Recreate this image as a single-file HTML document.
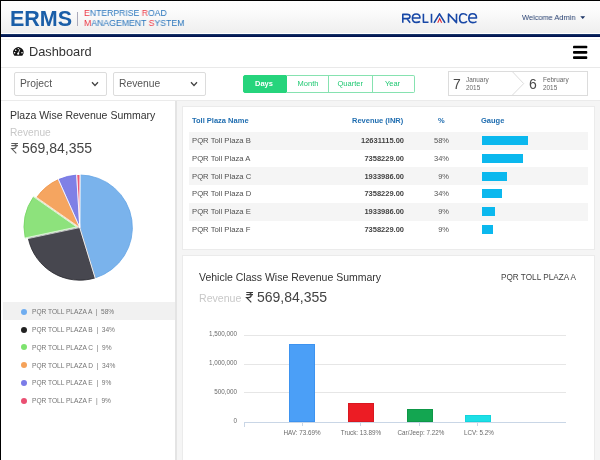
<!DOCTYPE html>
<html><head><meta charset="utf-8">
<style>
*{margin:0;padding:0;box-sizing:border-box}
html,body{width:600px;height:460px;overflow:hidden;background:#fff;}
.a{will-change:transform}
body{font-family:"Liberation Sans",sans-serif}
.a{position:absolute;white-space:nowrap}
#hdr{position:absolute;left:0;top:0;width:600px;height:34px;background:linear-gradient(#fefefe 0%,#fbfbfb 35%,#eeeeee 100%);}
#navy{position:absolute;left:0;top:34px;width:600px;height:3px;background:linear-gradient(#1d3c6e,#021652 60%,#00104c)}
#bl{position:absolute;left:0;top:0;width:1px;height:460px;background:#000;z-index:50}
#bt{position:absolute;left:0;top:0;width:600px;height:1px;background:#000;z-index:50}
.box{position:absolute;border:1px solid #dcdcdc;border-radius:2px;background:#fff}
.btn{will-change:transform;position:absolute;top:74.6px;height:17.6px;border:1px solid #86e2b0;color:#1fc872;font-size:7.5px;line-height:16px;text-align:center}
.tn{font-size:7.7px;color:#505050}
.tv{font-size:7.5px;color:#444;font-weight:bold;text-align:right}
.tp{font-size:7.5px;color:#555;text-align:right}
.lg{font-size:6.6px;color:#747474}
.dot{position:absolute;width:6px;height:6px;border-radius:50%}
.ax{font-size:6.3px;color:#6a6a6a}
</style></head><body>
<div id="bt"></div><div id="bl"></div>
<div id="hdr"></div>
<div class="a" style="left:0;top:33px;width:600px;height:1px;background:#fff"></div>
<div id="navy"></div>
<div class="a" style="left:0;top:39px;width:600px;height:1px;background:#f6f6f6"></div>

<div class="a" style="left:10.2px;top:8.5px;font-size:21.5px;line-height:21.5px;font-weight:bold;color:#1a5ea8">ERMS</div>
<div class="a" style="left:77px;top:11.5px;width:1px;height:14px;background:#aab"></div>
<div class="a" style="left:83.5px;top:8.6px;font-size:9px;line-height:9px;color:#2a76bd;transform:scaleX(0.962);transform-origin:0 0"><span style="color:#ec3845">E</span>NTERPRISE <span style="color:#ec3845">R</span>OAD</div>
<div class="a" style="left:83.5px;top:19px;font-size:9px;line-height:9px;color:#2a76bd;transform:scaleX(0.968);transform-origin:0 0"><span style="color:#ec3845">M</span>ANAGEMENT <span style="color:#ec3845">S</span>YSTEM</div>

<svg class="a" style="left:0;top:0" width="600" height="40" viewBox="0 0 600 40">
<g fill="none" stroke="#1747a6" stroke-width="1.6" stroke-linejoin="round">
<path d="M402.8 22.8 V14.4 H407 Q410 14.4 410 16.5 Q410 18.6 407 18.6 H402.8 M406.8 18.6 L410.2 22.8"/>
<path d="M412.4 18 H420 Q420 14 416.2 14 Q412.4 14 412.4 18.2 Q412.4 22.4 416.4 22.4 Q418.8 22.4 420 21.5"/>
<path d="M423.4 13.8 V22.2 H428.5"/>
<path d="M431.5 13.8 V22.8"/>
<path d="M434 22.8 L439.5 13.8 L445 22.8"/>
<path d="M448.5 22.8 V14 L456.5 22.6 V13.8"/>
<path d="M467 15.5 Q465.5 13.8 463.2 13.8 Q459.6 13.8 459.6 18.3 Q459.6 22.8 463.2 22.8 Q465.5 22.8 467 21.2"/>
<path d="M468.8 18 H476.5 Q476.5 13.8 472.6 13.8 Q468.8 13.8 468.8 18.3 Q468.8 22.6 472.8 22.6 Q475.3 22.6 476.5 21.5"/>
</g>
<path d="M437.2 22.8 L439.7 17.2 L442.2 22.8 L441 22.8 L439.7 19.8 L438.4 22.8 Z" fill="#e3262f"/>
<path d="M580.3 16.3 H585.2 L582.75 18.9 Z" fill="#1d3566"/>
</svg>
<div class="a" style="left:522.2px;top:14.1px;font-size:7.6px;line-height:8px;color:#263f70;transform:scaleX(0.975);transform-origin:0 0">Welcome Admin</div>

<!-- dashboard row -->
<svg class="a" style="left:10px;top:44px" width="16" height="14" viewBox="0 0 16 14">
<path d="M4.9 11.7 Q4.4 11.7 4.1 11.2 A5.15 5.15 0 1 1 12.6 11.2 Q12.3 11.7 11.8 11.7 Z" fill="#111"/>
<circle cx="5.7" cy="6.3" r="0.8" fill="#fff"/><circle cx="4.6" cy="8.8" r="0.8" fill="#fff"/><circle cx="12.0" cy="8.7" r="0.8" fill="#fff"/><circle cx="8.3" cy="4.6" r="0.7" fill="#fff"/>
<path d="M8.2 9.7 L9.9 5.2" stroke="#fff" stroke-width="0.8"/><circle cx="8.2" cy="9.7" r="1.1" fill="#fff"/>
</svg>
<div class="a" style="left:28.7px;top:45.6px;font-size:12.8px;line-height:12.8px;color:#333">Dashboard</div>
<svg class="a" style="left:560px;top:38px" width="40" height="28" viewBox="0 0 40 28"><g fill="#000"><rect x="13" y="7.67" width="14.3" height="2.67" rx="0.9"/><rect x="13" y="13" width="14.3" height="2.67" rx="0.9"/><rect x="13" y="18.33" width="14.3" height="2.67" rx="0.9"/></g></svg>
<div class="a" style="left:1px;top:67px;width:599px;height:1px;background:#e9e9e9"></div>

<!-- filters -->
<div class="box" style="left:14px;top:71.5px;width:93px;height:24px"></div>
<div class="a" style="left:20px;top:79px;font-size:10.3px;line-height:10.3px;color:#555">Project</div>
<svg class="a" style="left:91px;top:81px" width="8" height="6" viewBox="0 0 8 6"><path d="M1 1.3 L4 4.5 L7 1.3" fill="none" stroke="#444" stroke-width="1.3"/></svg>
<div class="box" style="left:112.5px;top:71.5px;width:93px;height:24px"></div>
<div class="a" style="left:119.3px;top:79px;font-size:10.3px;line-height:10.3px;color:#555">Revenue</div>
<svg class="a" style="left:190px;top:81px" width="8" height="6" viewBox="0 0 8 6"><path d="M1 1.3 L4 4.5 L7 1.3" fill="none" stroke="#444" stroke-width="1.3"/></svg>

<div class="btn" style="left:242.5px;width:44px;background:#26d47c;border-color:#26d47c;color:#fff;font-weight:bold;border-radius:2px 0 0 2px;padding-right:2px">Days</div>
<div class="btn" style="left:286px;width:43px;border-left:none;padding-left:2px">Month</div>
<div class="btn" style="left:328px;width:44.5px">Quarter</div>
<div class="btn" style="left:372px;width:43px;border-left:none;border-radius:0 2px 2px 0;padding-right:1px">Year</div>

<div class="a" style="left:448px;top:71px;width:140px;height:24.5px;border:1px solid #dcdcdc;background:#fff"></div>
<svg class="a" style="left:448px;top:71px" width="140" height="25" viewBox="0 0 140 25"><path d="M64.5 0.8 L75.7 12.6 L64.5 24" fill="none" stroke="#dcdcdc" stroke-width="1"/></svg>
<div class="a" style="left:452.5px;top:76.5px;font-size:14px;line-height:14px;color:#4a4a4a">7</div>
<div class="a" style="left:466px;top:76.1px;font-size:6.4px;line-height:8px;color:#666">January<br>2015</div>
<div class="a" style="left:529px;top:76.5px;font-size:14px;line-height:14px;color:#4a4a4a">6</div>
<div class="a" style="left:542.8px;top:76.1px;font-size:6.4px;line-height:8px;color:#666">February<br>2015</div>

<!-- grey area -->
<div class="a" style="left:1px;top:100px;width:599px;height:360px;background:#f5f5f5;border-top:1px solid #ebebeb"></div>
<div class="a" style="left:1px;top:101px;width:174px;height:359px;background:#fff"></div>
<div class="a" style="left:175px;top:101px;width:2px;height:359px;background:#e4e4e4"></div>

<div class="a" style="left:10.2px;top:109.8px;font-size:10.5px;line-height:10.5px;color:#333">Plaza Wise Revenue Summary</div>
<div class="a" style="left:10.2px;top:127.8px;font-size:10.2px;line-height:10.2px;color:#c8c8c8">Revenue</div>
<svg class="a" style="left:10px;top:142px" width="10" height="13" viewBox="0 0 10 13"><path d="M1.3 1.5 H8 M1.3 3.6 H8 M1.6 1.5 H3.6 Q6.2 1.5 6.2 4 Q6.2 6.6 3.4 6.6 H1.6 L6.3 11.3" fill="none" stroke="#5a5a5a" stroke-width="1.05"/></svg>
<div class="a" style="left:21.8px;top:141px;font-size:14px;line-height:14px;color:#444">569,84,355</div>

<svg class="a" style="left:0;top:0" width="180" height="300" viewBox="0 0 180 300">
<g stroke-linejoin="round">
<path d="M79.80 227.60 L80.08 175.00 A52.6 52.6 0 0 1 95.18 277.90 Z" fill="#7ab3ec" stroke="#62a3e4" stroke-width="0.8"/>
<path d="M79.80 227.60 L95.18 277.90 A52.6 52.6 0 0 1 28.35 238.54 Z" fill="#47474f" stroke="#26262c" stroke-width="0.8"/>
<path d="M76.66 226.96 L25.21 237.90 A52.6 52.6 0 0 1 33.58 196.79 Z" fill="#8de27c" stroke="#74d462" stroke-width="0.8"/>
<path d="M79.80 227.60 L36.71 197.43 A52.6 52.6 0 0 1 58.41 179.55 Z" fill="#f5a560" stroke="#ee9244" stroke-width="0.8"/>
<path d="M79.80 227.60 L58.41 179.55 A52.6 52.6 0 0 1 76.68 175.09 Z" fill="#7f80e6" stroke="#6a6ce2" stroke-width="0.8"/>
<path d="M79.80 227.60 L76.68 175.09 A52.6 52.6 0 0 1 80.08 175.00 Z" fill="#ea5a78"/>
<path d="M79.80 227.60 L80.08 174.00 M79.80 227.60 L95.47 278.86 M79.80 227.60 L95.47 278.86 M79.80 227.60 L27.37 238.74 M76.66 226.96 L24.24 238.11 M76.66 226.96 L32.76 196.22 M79.80 227.60 L35.89 196.86 M79.80 227.60 L58.00 178.63 M79.80 227.60 L58.00 178.63 M79.80 227.60 L76.62 174.09 M79.80 227.60 L76.62 174.09 M79.80 227.60 L80.08 174.00" stroke="#fff" stroke-width="0.7" fill="none"/>
</g>
</svg>

<div class="a" style="left:3px;top:302px;width:172px;height:17.6px;background:#f1f1f1"></div>
<div class="dot" style="left:21.2px;top:308.70px;background:#6fadf0"></div>
<div class="dot" style="left:21.2px;top:326.54px;background:#222"></div>
<div class="dot" style="left:21.2px;top:344.38px;background:#7ee36f"></div>
<div class="dot" style="left:21.2px;top:362.22px;background:#f5a25a"></div>
<div class="dot" style="left:21.2px;top:380.06px;background:#7b7ce8"></div>
<div class="dot" style="left:21.2px;top:397.90px;background:#ea4f72"></div>
<div class="a lg" style="left:32px;top:303.3px;line-height:17.84px">PQR TOLL PLAZA A &nbsp;|&nbsp; 58%<br>PQR TOLL PLAZA B &nbsp;|&nbsp; 34%<br>PQR TOLL PLAZA C &nbsp;|&nbsp; 9%<br>PQR TOLL PLAZA D &nbsp;|&nbsp; 34%<br>PQR TOLL PLAZA E &nbsp;|&nbsp; 9%<br>PQR TOLL PLAZA F &nbsp;|&nbsp; 9%</div>

<!-- table panel -->
<div class="a" style="left:182px;top:106px;width:413px;height:143.5px;background:#fff;border:1px solid #ebebeb"></div>
<div class="a" style="left:189px;top:131.5px;width:399px;height:17.8px;background:#f5f5f5"></div>
<div class="a" style="left:189px;top:167.1px;width:399px;height:17.8px;background:#f5f5f5"></div>
<div class="a" style="left:189px;top:202.7px;width:399px;height:17.8px;background:#f5f5f5"></div>
<div class="a" style="left:192.3px;top:117px;font-size:7.5px;line-height:7.5px;color:#1f6db0;font-weight:bold">Toll Plaza Name</div>
<div class="a" style="left:352px;top:117px;font-size:7.5px;line-height:7.5px;color:#1f6db0;font-weight:bold">Revenue (INR)</div>
<div class="a" style="left:438px;top:117px;font-size:7.5px;line-height:7.5px;color:#1f6db0;font-weight:bold">%</div>
<div class="a" style="left:481.3px;top:117px;font-size:7.5px;line-height:7.5px;color:#1f6db0;font-weight:bold">Gauge</div>
<div class="a tn" style="left:192px;top:132.2px;line-height:17.8px">PQR Toll Plaza B<br>PQR Toll Plaza A<br>PQR Toll Plaza C<br>PQR Toll Plaza D<br>PQR Toll Plaza E<br>PQR Toll Plaza F</div>
<div class="a tv" style="left:324px;width:80px;top:132.2px;line-height:17.8px">12631115.00<br>7358229.00<br>1933986.00<br>7358229.00<br>1933986.00<br>7358229.00</div>
<div class="a tp" style="left:409px;width:40px;top:132.2px;line-height:17.8px">58%<br>34%<br>9%<br>34%<br>9%<br>9%</div>
<div class="a" style="left:482px;top:136px;width:46px;height:8.5px;background:#0bb8ee"></div>
<div class="a" style="left:482px;top:153.8px;width:40.5px;height:8.5px;background:#0bb8ee"></div>
<div class="a" style="left:482px;top:171.6px;width:25.2px;height:8.5px;background:#0bb8ee"></div>
<div class="a" style="left:482px;top:189.4px;width:19.7px;height:8.5px;background:#0bb8ee"></div>
<div class="a" style="left:482px;top:207.2px;width:12.8px;height:8.5px;background:#0bb8ee"></div>
<div class="a" style="left:482px;top:225px;width:11px;height:8.5px;background:#0bb8ee"></div>

<!-- chart panel -->
<div class="a" style="left:182px;top:254.5px;width:413px;height:206px;background:#fff;border:1px solid #ebebeb"></div>
<div class="a" style="left:199px;top:272.4px;font-size:10.5px;line-height:10.5px;color:#333">Vehicle Class Wise Revenue Summary</div>
<div class="a" style="left:199.2px;top:293px;font-size:10.6px;line-height:10.6px;color:#c8c8c8">Revenue</div>
<svg class="a" style="left:245.2px;top:291.2px" width="10" height="13" viewBox="0 0 10 13"><path d="M1.3 1.5 H8 M1.3 3.6 H8 M1.6 1.5 H3.6 Q6.2 1.5 6.2 4 Q6.2 6.6 3.4 6.6 H1.6 L6.3 11.3" fill="none" stroke="#3a3a3a" stroke-width="1.2"/></svg>
<div class="a" style="left:256.6px;top:290.1px;font-size:14px;line-height:14px;color:#444">569,84,355</div>
<div class="a" style="left:501.2px;top:274.2px;font-size:8.2px;line-height:8.2px;color:#444">PQR TOLL PLAZA A</div>

<div class="a" style="left:244px;top:334.5px;width:321.8px;height:1px;background:#e6e6e6"></div>
<div class="a" style="left:244px;top:363.7px;width:321.8px;height:1px;background:#e6e6e6"></div>
<div class="a" style="left:244px;top:392.2px;width:321.8px;height:1px;background:#e6e6e6"></div>
<div class="a" style="left:244px;top:421.5px;width:321.8px;height:1px;background:#c9d6e6"></div>
<div class="a" style="left:243.5px;top:421.5px;width:1px;height:4.5px;background:#c9d6e6"></div>
<div class="a" style="left:301.8px;top:422px;width:1px;height:4px;background:#c9d6e6"></div>
<div class="a" style="left:360.3px;top:422px;width:1px;height:4px;background:#c9d6e6"></div>
<div class="a" style="left:419px;top:422px;width:1px;height:4px;background:#c9d6e6"></div>
<div class="a" style="left:477px;top:422px;width:1px;height:4px;background:#c9d6e6"></div>
<div class="a ax" style="left:200px;width:37px;text-align:right;top:331.2px;line-height:6.3px">1,500,000</div>
<div class="a ax" style="left:200px;width:37px;text-align:right;top:360.4px;line-height:6.3px">1,000,000</div>
<div class="a ax" style="left:200px;width:37px;text-align:right;top:388.9px;line-height:6.3px">500,000</div>
<div class="a ax" style="left:200px;width:37px;text-align:right;top:418.2px;line-height:6.3px">0</div>

<div class="a" style="left:289px;top:343.7px;width:26px;height:78.3px;background:#4b9ff7;border:1px solid #3d93f0"></div>
<div class="a" style="left:348px;top:403.3px;width:26px;height:18.7px;background:#ec1c24;border:1px solid #d81820"></div>
<div class="a" style="left:406.5px;top:409px;width:26px;height:13px;background:#13a651;border:1px solid #0e9747"></div>
<div class="a" style="left:464.5px;top:415px;width:26px;height:7px;background:#1ddfe6;border:1px solid #14d4dc"></div>

<div class="a ax" style="left:262px;width:80px;text-align:center;top:430px;line-height:6.3px">HAV: 73.69%</div>
<div class="a ax" style="left:321px;width:80px;text-align:center;top:430px;line-height:6.3px">Truck: 13.89%</div>
<div class="a ax" style="left:381px;width:80px;text-align:center;top:430px;line-height:6.3px">Car/Jeep: 7.22%</div>
<div class="a ax" style="left:439px;width:80px;text-align:center;top:430px;line-height:6.3px">LCV: 5.2%</div>

</body></html>
